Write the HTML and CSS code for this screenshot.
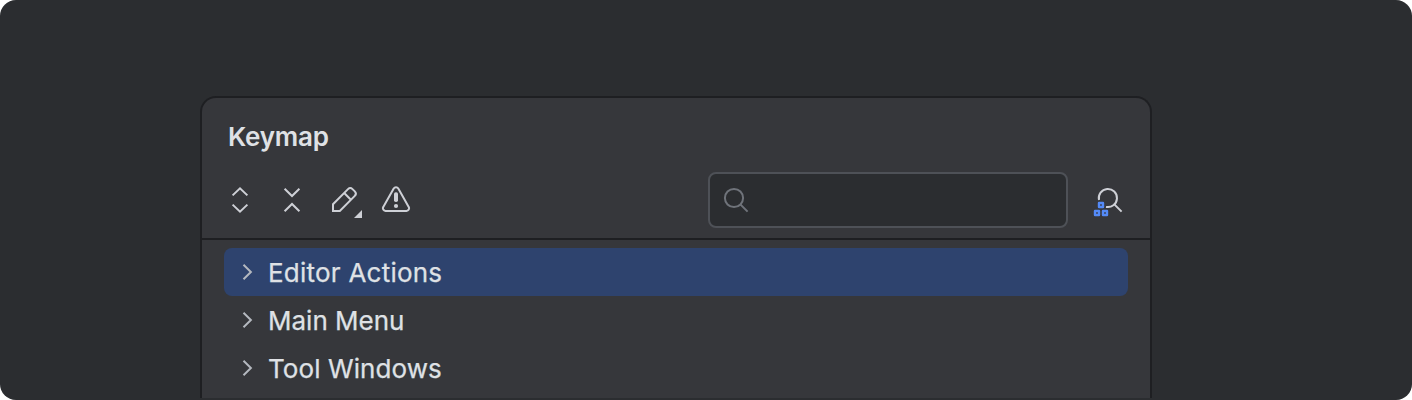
FILE: index.html
```html
<!DOCTYPE html>
<html lang="en">
<head>
<meta charset="utf-8">
<title>Keymap</title>
<link rel="stylesheet" href="styles.css">
</head>
<body>
<main class="stage">
  <section class="panel">
    <header class="header">
      <h1 class="title">Keymap</h1>
      <div class="toolbar">
        <svg class="icon" viewBox="0 0 32 32"><path d="M8.6 11.4 16 4.3l7.4 7.1M8.6 20.6l7.4 7.1 7.4-7.1"/></svg>
        <svg class="icon" viewBox="0 0 32 32"><path d="M8.6 4.8 16 12l7.4-7.2M8.6 27.2 16 20l7.4 7.2"/></svg>
        <svg class="icon" viewBox="0 0 32 32"><path d="M5 27v-6.8L20 5.1a3.2 3.2 0 0 1 4.5 0l2.3 2.3a3.2 3.2 0 0 1 0 4.5L11.8 27zM16.2 9l6.7 6.7"/><path class="solid" d="M34 26v8h-8z"/></svg>
        <svg class="icon" viewBox="0 0 32 32"><path d="M13.7 4.6a2.7 2.7 0 0 1 4.6 0l10.4 18.3a2.6 2.6 0 0 1-2.3 4H5.6a2.6 2.6 0 0 1-2.3-4z"/><rect class="solid" x="14" y="8.2" width="4" height="9.8" rx="1.8"/><circle class="solid" cx="16" cy="22" r="2.1"/></svg>
        <div class="search">
          <svg class="icon muted" viewBox="0 0 32 32"><circle cx="14" cy="14" r="9.1"/><path d="m20.6 20.6 7 7"/></svg>
        </div>
        <svg class="icon" viewBox="0 0 32 32"><path d="M5 16A9.1 9.1 0 1 1 12 22.9M20.6 20.6l7 7"/><path class="keys" d="M5 19h4v4H5zM1 27h4v4H1zM9 27h4v4H9z"/></svg>
      </div>
    </header>
    <ul class="tree">
      <li class="row selected"><svg class="arrow" viewBox="0 0 32 32"><path d="m11.5 8.7 7.4 7.3-7.4 7.3"/></svg><span class="label-wide">Editor Actions</span></li>
      <li class="row"><svg class="arrow" viewBox="0 0 32 32"><path d="m11.5 8.7 7.4 7.3-7.4 7.3"/></svg>Main Menu</li>
      <li class="row"><svg class="arrow" viewBox="0 0 32 32"><path d="m11.5 8.7 7.4 7.3-7.4 7.3"/></svg><span class="label-open">Tool Windows</span></li>
    </ul>
  </section>
</main>
</body>
</html>
```
FILE: styles.css
```css
* { box-sizing: border-box; }
body { margin: 0; background: #fff; font-family: Inter, sans-serif; color: #dfe1e5; }
.stage { height: 400px; padding: 96px 260px 2px 200px; background: #2b2d30; border-radius: 16px; overflow: hidden; }
.panel { height: 302px; background: #36373b; border: 2px solid #1e1f22; border-bottom: 0; border-radius: 16px 16px 0 0; }
.header { height: 142px; padding: 23px 24px 0 26px; border-bottom: 2px solid #1e1f22; }
.title { margin: 0; font-size: 26px; line-height: 32px; font-weight: 600; letter-spacing: -0.2px; }
.toolbar { display: flex; align-items: center; gap: 20px; height: 56px; margin: 19px 0 0 -4px; }
.icon, .arrow { display: block; flex: none; width: 32px; height: 32px; overflow: visible; fill: none; stroke: #ced0d6; stroke-width: 2; }
.icon .solid { fill: #ced0d6; stroke: none; }
.icon .keys { stroke: #548af7; stroke-width: 2.4; stroke-linejoin: round; }
.icon.muted { stroke: #6f737a; }
.search { display: flex; align-items: center; width: 360px; height: 56px; margin-left: auto; padding-left: 10px; background: #2b2d30; border: 2px solid #4e5157; border-radius: 8px; }
.search + .icon { margin-left: 6px; }
.tree { list-style: none; margin: 0; padding: 8px 22px 0; }
.row { display: flex; align-items: center; height: 48px; padding: 1px 0 0 8px; gap: 4px; border-radius: 8px; font-size: 26px; line-height: 32px; -webkit-text-stroke: 0.25px #dfe1e5; }
.row .arrow { margin-top: -2px; stroke: #b4b8bf; }
.label-wide { letter-spacing: 0.23px; }
.label-open { letter-spacing: 0.08px; }
.selected { background: #2e436e; }
```
